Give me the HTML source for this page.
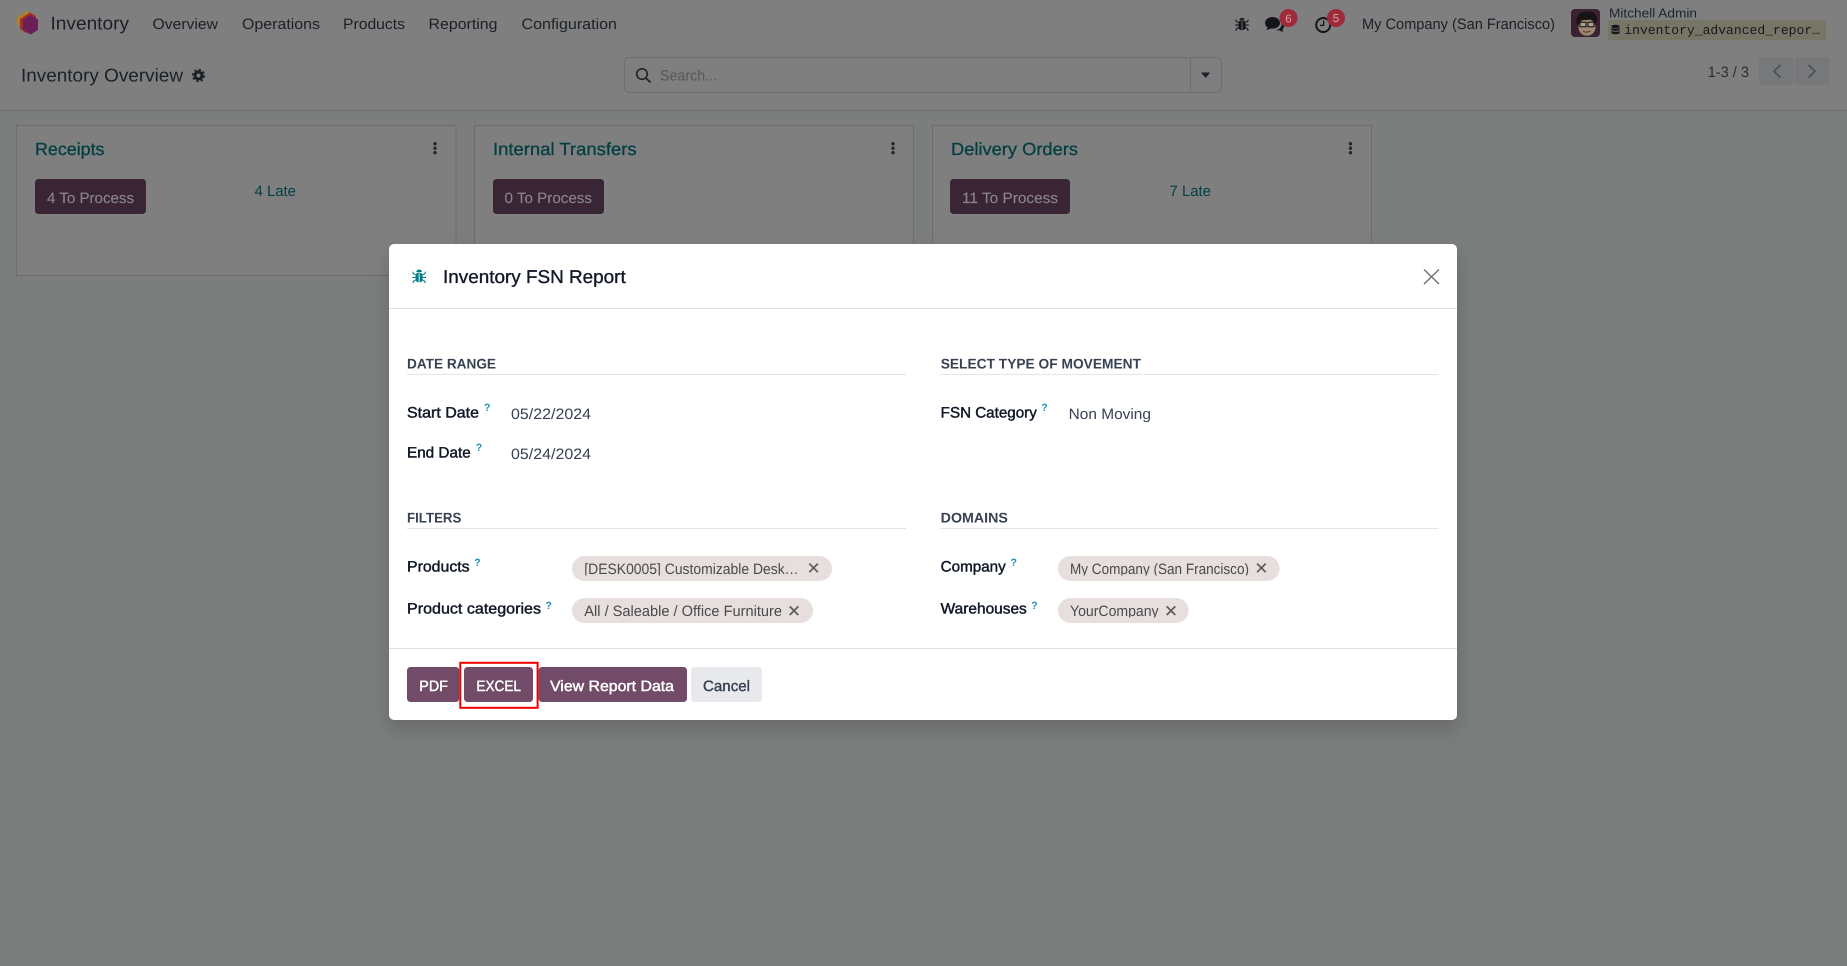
<!DOCTYPE html>
<html lang="en">
<head>
<meta charset="utf-8">
<title>Inventory FSN Report</title>
<style>
html,body{margin:0;padding:0;width:1847px;height:966px;overflow:hidden;background:#7c7e7d}
svg{position:absolute;left:0;top:0;display:block}
text{font-family:"Liberation Sans",Arial,sans-serif;text-rendering:geometricPrecision;white-space:pre}
.modal{position:absolute;left:389px;top:244px;width:1068px;height:476px;background:#fff;border-radius:5px;box-shadow:0 9px 19px rgba(0,0,0,.17)}
.n{font-size:15px;fill:#1b2028}
.teal{fill:#003f42;font-size:15px}
.cardt{fill:#003f42;font-size:17.5px;stroke:#003f42;stroke-width:.3}
.bt{fill:#8a8488;font-size:15px;stroke:#8a8488;stroke-width:.15}
.h{font-size:14px;font-weight:700;fill:#374151}
.l{font-size:15px;fill:#111827;stroke:#111827;stroke-width:.45}
.v{font-size:15px;fill:#374151}
.q{font-size:10.5px;font-weight:700;fill:#1a94b8}
.c{font-size:15px;fill:#4a4a4c}
.w{font-size:15px;fill:#fff;stroke:#fff;stroke-width:.45}
</style>
</head>
<body>
<svg width="1847" height="966" viewBox="0 0 1847 966" xmlns="http://www.w3.org/2000/svg">
  <rect x="0" y="0" width="1847" height="110" fill="#7f7f7f"/>
  <rect x="0" y="110" width="1847" height="1" fill="#6e6f70"/>
  <!-- logo -->
  <polygon points="17,17.5 27,11 33,14.5 33,28 23,28 17,24" fill="#b07f26"/>
  <polygon points="20,19 30,12.5 36,16 36,28 26,33 20,29" fill="#a42f22"/>
  <polygon points="30.5,15 38,19.5 38,30 30.5,34.5 23,30 23,19.5" fill="#6a1f57"/>
  <text class="n" x="50.5" y="29.5" style="font-size:18.5px" textLength="78.5" lengthAdjust="spacingAndGlyphs">Inventory</text>
  <text class="n" x="152.5" y="29" textLength="65.5" lengthAdjust="spacingAndGlyphs">Overview</text>
  <text class="n" x="242" y="29" textLength="78" lengthAdjust="spacingAndGlyphs">Operations</text>
  <text class="n" x="343" y="29" textLength="62" lengthAdjust="spacingAndGlyphs">Products</text>
  <text class="n" x="428.5" y="29" textLength="69" lengthAdjust="spacingAndGlyphs">Reporting</text>
  <text class="n" x="521.5" y="29" textLength="95.5" lengthAdjust="spacingAndGlyphs">Configuration</text>

  <!-- systray -->
  <g transform="translate(1235,16.5)" fill="#14171c">
    <path d="M4.2 3.2a2.9 2.4 0 0 1 5.6 0z"/>
    <rect x="3.5" y="3.8" width="7" height="10" rx="3"/>
    <rect x="6.6" y="4.6" width=".8" height="9.4" fill="#7f7f7f"/>
    <path d="M3.5 6L1.2 4.8.8 3M3.5 8.6H.2M3.8 11L1.3 12.5 1 14.4M10.5 6l2.3-1.2L13.2 3M10.5 8.6h3.3M10.2 11l2.5 1.5.3 1.9" fill="none" stroke="#14171c" stroke-width="1.1"/>
  </g>
  <path d="M1272.5 17c-4.2 0-7.5 2.7-7.5 6 0 1.8 1 3.4 2.6 4.5-.2 1-.8 1.8-1.5 2.5 1.8-.1 3.3-.8 4.3-1.6.7.1 1.4.2 2.1.2 4.2 0 7.5-2.7 7.5-5.6 0-3.3-3.3-6-7.5-6z" fill="#12151a"/>
  <path d="M1281 22c1.9 1 3 2.5 3 4.2 0 1.2-.6 2.4-1.6 3.2.1.9.5 1.7 1.1 2.4-1.6-.1-3-.8-3.8-1.6-1.2.3-2.6.3-3.7-.1 3-.6 5.5-2.7 5.7-5.4.1-.9 0-1.7-.7-2.7z" fill="#12151a"/>
  <circle cx="1288.5" cy="18" r="9" fill="#9e2a3a"/>
  <text x="1288.5" y="22.3" text-anchor="middle" style="font-size:11.5px;fill:#d0a8ad">6</text>
  <circle cx="1323.2" cy="25" r="7" fill="none" stroke="#12151a" stroke-width="2"/>
  <path d="M1323.6 20.5v4.9h-3.6" fill="none" stroke="#12151a" stroke-width="1.3"/>
  <circle cx="1336" cy="18" r="9" fill="#9e2a3a"/>
  <text x="1336" y="22" text-anchor="middle" style="font-size:11.5px;fill:#d0a8ad">5</text>
  <text class="n" x="1362" y="29" textLength="193" lengthAdjust="spacingAndGlyphs">My Company (San Francisco)</text>

  <!-- avatar -->
  <rect x="1571" y="9" width="29" height="28" rx="4" fill="#3a2233"/>
  <ellipse cx="1587" cy="27.5" rx="8.5" ry="8.3" fill="#9c8770"/>
  <path d="M1577 25C1575 16 1580 11 1587 11.5C1593 11 1597.5 14 1597 20L1595.5 24.500C1595 21.500 1593.500 19.800 1591 19.200C1587 20.200 1583 20.200 1580.500 19.500C1579.300 21 1578.500 23 1578.500 25.500Z" fill="#161413"/>
  <rect x="1580" y="22.300" width="6" height="4.400" fill="#a8a59a" stroke="#1a1614" stroke-width="1.100"/>
  <rect x="1588" y="22.300" width="6" height="4.400" fill="#a8a59a" stroke="#1a1614" stroke-width="1.100"/>
  <path d="M1583 31.300q4 1.800 7.500-.3" fill="none" stroke="#4a2f28" stroke-width="1"/>

  <text x="1609" y="17.700" style="font-size:13px;fill:#1b2430" textLength="88" lengthAdjust="spacingAndGlyphs">Mitchell Admin</text>
  <rect x="1608" y="20" width="218" height="20" fill="#777566"/>
  <g fill="#14171c">
    <ellipse cx="1615.500" cy="26.500" rx="4.200" ry="1.700"/>
    <path d="M1611.300 27.700c1 1.400 7.400 1.400 8.400 0v2c-1 1.400-7.400 1.400-8.400 0z"/>
    <path d="M1611.300 30.700c1 1.400 7.400 1.400 8.400 0v2c-.5 2-7.900 2-8.400 0z"/>
  </g>
  <text x="1624.300" y="34" style="font-family:'Liberation Mono',monospace;font-size:13px;fill:#16191e" textLength="195.700" lengthAdjust="spacingAndGlyphs">inventory_advanced_repor…</text>

  <!-- control panel -->
  <text x="21" y="81.500" style="font-size:18.500px;fill:#1b2028" textLength="162" lengthAdjust="spacingAndGlyphs">Inventory Overview</text>
  <circle cx="198.500" cy="75.500" r="3.500" fill="none" stroke="#1b2028" stroke-width="3"/>
  <circle cx="198.500" cy="75.500" r="5.700" fill="none" stroke="#1b2028" stroke-width="1.800" stroke-dasharray="2.240 2.240"/>

  <rect x="624.500" y="57.500" width="597" height="35" rx="5" fill="#7f7f7f" stroke="#6c6e70"/>
  <rect x="1190" y="58" width="1" height="34" fill="#6c6e70"/>
  <circle cx="642" cy="74" r="5.300" fill="none" stroke="#1b2028" stroke-width="1.500"/>
  <path d="M646 78.200l4.500 4.200" stroke="#1b2028" stroke-width="1.700" fill="none"/>
  <text x="660" y="80.500" style="font-size:15px;fill:#565759" textLength="57" lengthAdjust="spacingAndGlyphs">Search...</text>
  <polygon points="1201,72.500 1210.200,72.500 1205.600,78" fill="#1b2028"/>

  <text x="1707.700" y="77" style="font-size:15px;fill:#2b2d31" textLength="41.300" lengthAdjust="spacingAndGlyphs">1-3 / 3</text>
  <rect x="1759" y="57" width="35" height="28" rx="3" fill="#767879"/>
  <rect x="1795" y="57" width="35" height="28" rx="3" fill="#767879"/>
  <path d="M1780.500 65l-6.500 6.300 6.500 6.300M1808.500 65l6.500 6.300-6.500 6.300" fill="none" stroke="#46484c" stroke-width="1.400"/>

  <!-- cards -->
  <g fill="#7f7f7f" stroke="#6c6d6e">
    <rect x="16.500" y="125.500" width="439.500" height="150"/>
    <rect x="474.500" y="125.500" width="439" height="150"/>
    <rect x="932.500" y="125.500" width="439" height="150"/>
  </g>
  <text class="cardt" x="35" y="155" textLength="69.500" lengthAdjust="spacingAndGlyphs">Receipts</text>
  <text class="cardt" x="493" y="155" textLength="143.600" lengthAdjust="spacingAndGlyphs">Internal Transfers</text>
  <text class="cardt" x="951" y="155" textLength="127" lengthAdjust="spacingAndGlyphs">Delivery Orders</text>
  <g fill="#24272c">
    <circle cx="435" cy="143.700" r="1.700"/><circle cx="435" cy="148.200" r="1.700"/><circle cx="435" cy="152.700" r="1.700"/>
    <circle cx="893" cy="143.700" r="1.700"/><circle cx="893" cy="148.200" r="1.700"/><circle cx="893" cy="152.700" r="1.700"/>
    <circle cx="1350.500" cy="143.700" r="1.700"/><circle cx="1350.500" cy="148.200" r="1.700"/><circle cx="1350.500" cy="152.700" r="1.700"/>
  </g>
  <rect x="35" y="179" width="111" height="35" rx="3.500" fill="#392534"/>
  <rect x="493" y="179" width="111" height="35" rx="3.500" fill="#392534"/>
  <rect x="950" y="179" width="120" height="35" rx="3.500" fill="#392534"/>
  <text class="bt" x="47" y="203" textLength="87" lengthAdjust="spacingAndGlyphs">4 To Process</text>
  <text class="bt" x="504.500" y="203" textLength="87.500" lengthAdjust="spacingAndGlyphs">0 To Process</text>
  <text class="bt" x="962" y="203" textLength="96" lengthAdjust="spacingAndGlyphs">11 To Process</text>
  <text class="teal" x="254.500" y="196" textLength="41.500" lengthAdjust="spacingAndGlyphs">4 Late</text>
  <text class="teal" x="1169.500" y="196" textLength="41.500" lengthAdjust="spacingAndGlyphs">7 Late</text>
</svg>

<div class="modal"></div>

<svg width="1847" height="966" viewBox="0 0 1847 966" xmlns="http://www.w3.org/2000/svg">
  <defs>
    <clipPath id="c1"><rect x="570" y="556" width="260" height="19.500"/></clipPath>
    <clipPath id="c3"><rect x="1056" y="556" width="220" height="19.500"/></clipPath>
    <clipPath id="c4"><rect x="1056" y="598" width="130" height="19.500"/></clipPath>
  </defs>
  <rect x="389" y="308" width="1068" height="1" fill="#dfe0e2"/>
  <rect x="389" y="648" width="1068" height="1" fill="#dfe0e2"/>

  <g transform="translate(412,269)" fill="#017e84">
    <path d="M4.300 3a2.800 2.400 0 0 1 5.700 0z"/>
    <rect x="3.600" y="3.600" width="7.100" height="9.800" rx="3"/>
    <rect x="6.700" y="4.400" width=".9" height="9.200" fill="#fff"/>
    <path d="M3.600 5.800L1.300 4.600.9 2.800M3.600 8.400H.3M3.900 10.800L1.400 12.300 1.100 14.200M10.700 5.800l2.300-1.200.4-1.800M10.700 8.400H14M10.400 10.800l2.500 1.500.3 1.900" fill="none" stroke="#017e84" stroke-width="1.100"/>
  </g>
  <text x="443" y="283" style="font-size:18.500px;fill:#111827;stroke:#111827;stroke-width:.35" textLength="182.700" lengthAdjust="spacingAndGlyphs">Inventory FSN Report</text>
  <path d="M1424 269.500l15 14.500M1439 269.500l-15 14.500" stroke="#6f7072" stroke-width="1.400" fill="none"/>

  <text class="h" x="407" y="368.700" textLength="89" lengthAdjust="spacingAndGlyphs">DATE RANGE</text>
  <rect x="407" y="374" width="499" height="1" fill="#e3e5e8"/>
  <text class="h" x="940.700" y="368.700" textLength="200.300" lengthAdjust="spacingAndGlyphs">SELECT TYPE OF MOVEMENT</text>
  <rect x="940" y="374" width="498.600" height="1" fill="#e3e5e8"/>

  <text class="l" x="407" y="417.700" textLength="72" lengthAdjust="spacingAndGlyphs">Start Date</text>
  <text class="q" x="484" y="411">?</text>
  <text class="v" x="511" y="419" textLength="80" lengthAdjust="spacingAndGlyphs">05/22/2024</text>
  <text class="l" x="407" y="457.700" textLength="63.700" lengthAdjust="spacingAndGlyphs">End Date</text>
  <text class="q" x="475.700" y="451">?</text>
  <text class="v" x="511" y="459" textLength="80" lengthAdjust="spacingAndGlyphs">05/24/2024</text>
  <text class="l" x="940.700" y="417.700" textLength="96.100" lengthAdjust="spacingAndGlyphs">FSN Category</text>
  <text class="q" x="1041.300" y="411">?</text>
  <text class="v" x="1068.600" y="419" textLength="82.400" lengthAdjust="spacingAndGlyphs">Non Moving</text>

  <text class="h" x="407" y="522.700" textLength="54.400" lengthAdjust="spacingAndGlyphs">FILTERS</text>
  <rect x="407" y="528" width="499" height="1" fill="#e3e5e8"/>
  <text class="h" x="940.700" y="522.700" textLength="67.200" lengthAdjust="spacingAndGlyphs">DOMAINS</text>
  <rect x="940" y="528" width="498.600" height="1" fill="#e3e5e8"/>

  <text class="l" x="407" y="571.500" textLength="62.600" lengthAdjust="spacingAndGlyphs">Products</text>
  <text class="q" x="474.300" y="566">?</text>
  <text class="l" x="407" y="613.700" textLength="134" lengthAdjust="spacingAndGlyphs">Product categories</text>
  <text class="q" x="545.500" y="609">?</text>
  <text class="l" x="940.700" y="571.500" textLength="65" lengthAdjust="spacingAndGlyphs">Company</text>
  <text class="q" x="1010.500" y="566">?</text>
  <text class="l" x="940.700" y="613.700" textLength="86.100" lengthAdjust="spacingAndGlyphs">Warehouses</text>
  <text class="q" x="1031.300" y="609">?</text>

  <g fill="#e6dfdd">
    <rect x="572" y="556" width="260" height="25" rx="12.500"/>
    <rect x="572" y="598" width="241" height="25" rx="12.500"/>
    <rect x="1058" y="556" width="221.600" height="25" rx="12.500"/>
    <rect x="1058" y="598" width="130.600" height="25" rx="12.500"/>
  </g>
  <g clip-path="url(#c1)"><text class="c" x="584.300" y="574" textLength="214.300" lengthAdjust="spacingAndGlyphs">[DESK0005] Customizable Desk…</text></g>
  <text class="c" x="584.300" y="616" textLength="197.700" lengthAdjust="spacingAndGlyphs">All / Saleable / Office Furniture</text>
  <g clip-path="url(#c3)"><text class="c" x="1070" y="574" textLength="179" lengthAdjust="spacingAndGlyphs">My Company (San Francisco)</text></g>
  <g clip-path="url(#c4)"><text class="c" x="1070" y="616" textLength="88.600" lengthAdjust="spacingAndGlyphs">YourCompany</text></g>
  <g stroke="#5b5b5d" stroke-width="1.700" fill="none">
    <path d="M809.300 563.600l8.600 8.600M817.900 563.600l-8.600 8.600"/>
    <path d="M789.700 606.400l8.600 8.600M798.300 606.400l-8.600 8.600"/>
    <path d="M1257.100 563.600l8.600 8.600M1265.700 563.600l-8.600 8.600"/>
    <path d="M1166.700 606.400l8.600 8.600M1175.300 606.400l-8.600 8.600"/>
  </g>

  <rect x="407" y="667" width="52.300" height="35" rx="3.500" fill="#714b67"/>
  <rect x="464" y="667" width="69" height="35" rx="3.500" fill="#714b67"/>
  <rect x="538.600" y="667" width="148.400" height="35" rx="3.500" fill="#714b67"/>
  <rect x="691" y="667" width="71" height="35" rx="3.500" fill="#e7e9ed"/>
  <rect x="460.300" y="662.800" width="77.300" height="45" fill="none" stroke="#f00000" stroke-width="2"/>
  <text class="w" x="419.300" y="691" textLength="28.600" lengthAdjust="spacingAndGlyphs">PDF</text>
  <text class="w" x="476.400" y="691" textLength="44.600" lengthAdjust="spacingAndGlyphs">EXCEL</text>
  <text class="w" x="550" y="691" textLength="124" lengthAdjust="spacingAndGlyphs">View Report Data</text>
  <text x="703" y="691" style="font-size:15px;fill:#374151;stroke:#374151;stroke-width:.4" textLength="47" lengthAdjust="spacingAndGlyphs">Cancel</text>
</svg>
</body>
</html>
